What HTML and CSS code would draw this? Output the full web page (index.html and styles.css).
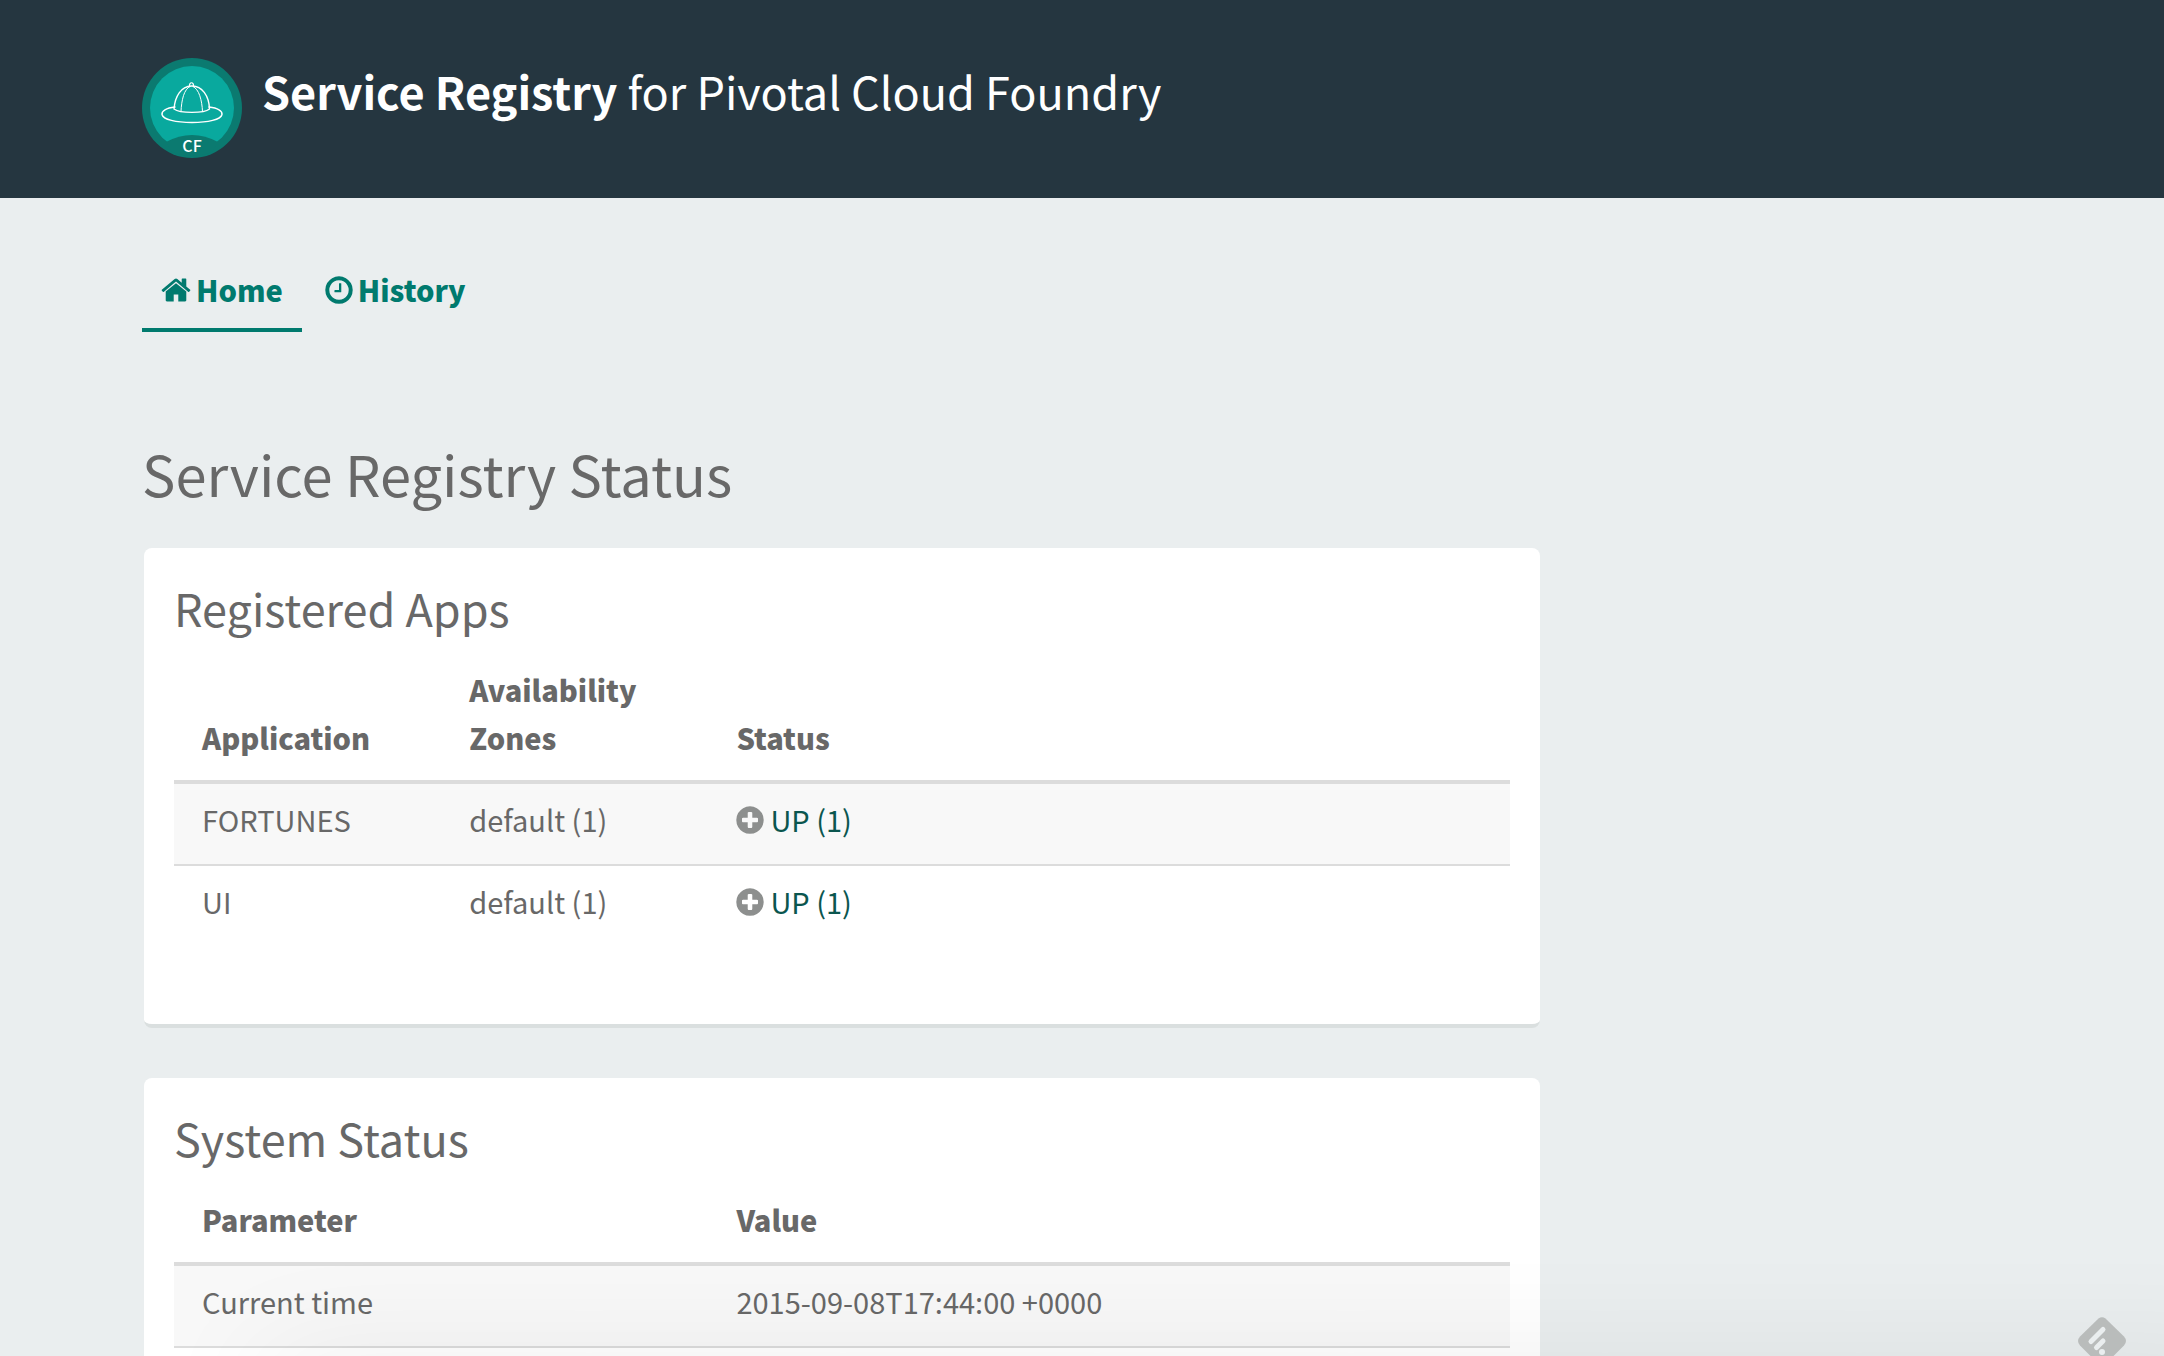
FILE: index.html
```html
<!DOCTYPE html>
<html lang="en">
<head>
<meta charset="utf-8">
<meta name="viewport" content="width=device-width, initial-scale=1">
<title>Service Registry</title>
<link rel="stylesheet" href="styles.css">
</head>
<body>
<header class="banner">
  <svg class="banner-logo" viewBox="0 0 100 100" role="img" aria-label="Cloud Foundry">
    <circle cx="50" cy="50" r="50" fill="#0b7a70"/>
    <circle cx="50" cy="50" r="42" fill="#09a99e"/>
    <path d="M24 84Q50 70 76 84L70 94Q50 102 30 94Z" fill="#0b7a70"/>
    <g fill="none" stroke="#fff" stroke-width="1.4" stroke-linecap="round">
      <path d="M33 49C24 50 19.500 53 20 56.500C21 61.500 34 64.500 50 64.500S79 61.500 80 56.500C80.500 53 76 50 67 49" />
      <path d="M32 51C33 38 39 28.500 49.500 28S67 38 67.500 51C62 55.500 38 55.500 32 51Z"/>
      <path d="M39 53.500C39.500 42 42 31 48 28.500M60.500 53.500C60 42 57 31 51 28.500" stroke-width="1"/>
      <path d="M47.500 28.500C47 23.500 52 23.500 51.500 28.500" stroke-width="1.2"/>
    </g>
    <text class="banner-logo-text" x="50" y="94" text-anchor="middle">CF</text>
  </svg>
  <h1 class="banner-title"><strong>Service Registry</strong> for Pivotal Cloud Foundry</h1>
</header>

<main class="page">
  <nav class="tabs">
    <a class="tab tab-active" href="#home" aria-current="page">
      <svg class="tab-icon" viewBox="56 0 1680 1792" width="30" height="32" aria-hidden="true"><path d="M1472 992v480q0 26-19 45t-45 19h-384v-384h-256v384h-384q-26 0-45-19t-19-45v-480q0-1 .5-3t.5-3l575-474 575 474q1 2 1 6zm223-69l-62 74q-8 9-21 11h-3q-13 0-21-7l-692-577-692 577q-12 8-24 7-13-2-21-11l-62-74q-8-10-7-23.500t11-21.500l719-599q32-26 76-26t76 26l244 204v-195q0-14 9-23t23-9h192q14 0 23 9t9 23v408l219 182q10 8 11 21.500t-7 23.500z"/></svg>
      Home
    </a>
    <a class="tab" href="#history">
      <svg class="tab-icon" viewBox="112 0 1568 1792" width="28" height="32" aria-hidden="true"><path d="M1024 544v448q0 14-9 23t-23 9h-320q-14 0-23-9t-9-23v-64q0-14 9-23t23-9h224v-352q0-14 9-23t23-9h64q14 0 23 9t9 23zm416 352q0-148-73-273t-198-198-273-73-273 73-198 198-73 273 73 273 198 198 273 73 273-73 198-198 73-273zm224 0q0 209-103 385.500t-279.500 279.500-385.500 103-385.500-103-279.500-279.500-103-385.500 103-385.500 279.500-279.500 385.500-103 385.500 103 279.500 279.500 103 385.500z"/></svg>
      History
    </a>
  </nav>

  <h2 class="page-title">Service Registry Status</h2>

  <section class="card">
    <h3 class="card-title">Registered Apps</h3>
    <table class="grid grid-apps">
      <colgroup><col class="col-1"><col class="col-1"><col></colgroup>
      <thead>
        <tr><th scope="col">Application</th><th scope="col">Availability Zones</th><th scope="col">Status</th></tr>
      </thead>
      <tbody>
        <tr>
          <td>FORTUNES</td>
          <td>default (1)</td>
          <td><span class="status"><svg class="status-icon" viewBox="112 0 1568 1792" width="28" height="32" aria-hidden="true"><path d="M1344 960v-128q0-26-19-45t-45-19h-256v-256q0-26-19-45t-45-19h-128q-26 0-45 19t-19 45v256h-256q-26 0-45 19t-19 45v128q0 26 19 45t45 19h256v256q0 26 19 45t45 19h128q26 0 45-19t19-45v-256h256q26 0 45-19t19-45zm320-64q0 209-103 385.500t-279.500 279.500-385.500 103-385.500-103-279.500-279.500-103-385.500 103-385.500 279.500-279.500 385.500-103 385.500 103 279.500 279.500 103 385.500z"/></svg><a href="#fortunes">UP (1)</a></span></td>
        </tr>
        <tr>
          <td>UI</td>
          <td>default (1)</td>
          <td><span class="status"><svg class="status-icon" viewBox="112 0 1568 1792" width="28" height="32" aria-hidden="true"><path d="M1344 960v-128q0-26-19-45t-45-19h-256v-256q0-26-19-45t-45-19h-128q-26 0-45 19t-19 45v256h-256q-26 0-45 19t-19 45v128q0 26 19 45t45 19h256v256q0 26 19 45t45 19h128q26 0 45-19t19-45v-256h256q26 0 45-19t19-45zm320-64q0 209-103 385.500t-279.500 279.500-385.500 103-385.500-103-279.500-279.500-103-385.500 103-385.500 279.500-279.500 385.500-103 385.500 103 279.500 279.500 103 385.500z"/></svg><a href="#ui">UP (1)</a></span></td>
        </tr>
      </tbody>
    </table>
  </section>

  <section class="card">
    <h3 class="card-title">System Status</h3>
    <table class="grid">
      <colgroup><col class="col-2"><col></colgroup>
      <thead>
        <tr><th scope="col">Parameter</th><th scope="col">Value</th></tr>
      </thead>
      <tbody>
        <tr><td>Current time</td><td>2015-09-08T17:44:00 +0000</td></tr>
      </tbody>
    </table>
  </section>
</main>

<div class="bottom-shade"></div>
<button class="feed-button" type="button" aria-label="Follow">
  <svg viewBox="0 0 48 48" width="48" height="48" aria-hidden="true">
    <path d="M20.500 1.500Q24-1.200 27.500 1.500L46 19.500Q50 24 46 28.500L30 44.500Q28 46 25 46H23Q20 46 18 44.500L2 28.500Q-2 24 2 19.500Z" fill="#b9bcbb"/>
    <path d="M13 24.500L25 12.500M18.500 30.500L25 24" stroke="#eaeeef" stroke-width="5" stroke-linecap="round"/>
    <circle cx="24" cy="35" r="3" fill="#eaeeef"/>
  </svg>
</button>
</body>
</html>
```
FILE: styles.css
```css
* {
  box-sizing: border-box;
}

body {
  margin: 0;
  background: #eaeeef;
  color: #686868;
  font-family: "Noto Sans CJK SC", "Noto Sans", sans-serif;
  font-size: 29px;
  line-height: 48px;
}

h1, h2, h3 {
  margin: 0;
  font-weight: 400;
}

a {
  color: #0b564f;
  text-decoration: none;
}

.banner {
  display: flex;
  align-items: flex-start;
  gap: 20px;
  padding: 58px 142px 40px;
  background: #253640;
  color: #fff;
}

.banner-logo {
  flex: none;
  width: 100px;
  height: 100px;
}

.banner-logo-text {
  fill: #fff;
  font-size: 16px;
  font-weight: 500;
}

.banner-title {
  font-size: 45px;
  line-height: 66px;
}

.page {
  max-width: 1684px;
  padding: 67px 142px 60px;
}

.tabs {
  display: flex;
  gap: 4px;
}

.tab {
  display: flex;
  align-items: center;
  gap: 5px;
  padding: 0 19px 15px;
  border-bottom: 4px solid transparent;
  color: #007a6e;
  font-weight: 900;
}

.tab-active {
  border-bottom-color: #007a6e;
}

.tab-icon,
.status-icon {
  margin-top: 2px;
}

.tab-icon {
  fill: #007a6e;
}

.page-title {
  margin: 101px 0 35px;
  font-size: 56px;
  line-height: 80px;
}

.card {
  margin: 0 2px 50px;
  padding: 28px 30px;
  border-bottom: 4px solid #dadfdf;
  border-radius: 8px;
  background: #fff;
}

.card-title {
  margin-bottom: 14px;
  font-size: 45px;
  line-height: 64px;
}

.grid {
  width: 100%;
  margin-bottom: 50px;
  border-spacing: 0;
  table-layout: fixed;
}

.col-1 {
  width: 20%;
}

.col-2 {
  width: 40%;
}

.grid th {
  padding: 11px 28px 19px;
  border-bottom: 4px solid #dcdcdc;
  font-weight: 900;
  text-align: left;
  vertical-align: bottom;
}

.grid td {
  padding: 11px 28px 21px;
  border-bottom: 2px solid #dcdcdc;
}

.grid-apps tbody tr:last-child td {
  border-bottom: 0;
}

.grid tbody tr:nth-child(odd) {
  background: #f8f8f8;
}

.status {
  display: flex;
  align-items: center;
  gap: 6px;
}

.status-icon {
  fill: #8d8f8e;
}

.bottom-shade {
  position: fixed;
  top: 100%;
  right: -100px;
  left: 260px;
  height: 100px;
  box-shadow: 0 0 120px rgba(0, 0, 0, 0.07);
  pointer-events: none;
}

.feed-button {
  position: fixed;
  right: 38px;
  bottom: -9px;
  display: flex;
  padding: 0;
  border: 0;
  background: none;
}
```
